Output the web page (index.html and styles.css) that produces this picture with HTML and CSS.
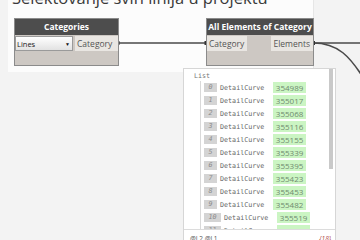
FILE: index.html
```html
<!DOCTYPE html>
<html>
<head>
<meta charset="utf-8">
<link rel="stylesheet" href="styles.css">
</head>
<body>
<div class="canvas">
  <div class="slide"></div>
  <div class="title">Selektovanje svih linija u projektu</div>

  <svg class="wires" width="360" height="240" viewBox="0 0 360 240">
    <path d="M118 43 L206 43" />
    <path d="M313 43 L360 43" />
    <path d="M313 43 C338 43 350 56 366 82" />
    <rect x="116.5" y="41" width="3" height="4" />
    <rect x="204.5" y="41" width="3" height="4" />
    <rect x="312" y="41" width="3" height="4" />
  </svg>

  <div class="node node-cat">
    <div class="node-head">Categories</div>
    <div class="node-ports">
      <div class="dropdown"><span>Lines</span><span class="arrow">▼</span></div>
      <div class="port">Category</div>
    </div>
  </div>

  <div class="node node-all">
    <div class="node-head">All Elements of Category</div>
    <div class="node-ports split">
      <div class="port">Category</div>
      <div class="port">Elements</div>
    </div>
  </div>

  <div class="watch">
    <div class="scroll"></div>
    <div class="watch-body">
      <div class="list-label">List</div>
      <div class="rows">
        <div class="row"><span class="idx">0</span><span class="type">DetailCurve</span><span class="val">354989</span></div>
        <div class="row"><span class="idx">1</span><span class="type">DetailCurve</span><span class="val">355017</span></div>
        <div class="row"><span class="idx">2</span><span class="type">DetailCurve</span><span class="val">355068</span></div>
        <div class="row"><span class="idx">3</span><span class="type">DetailCurve</span><span class="val">355116</span></div>
        <div class="row"><span class="idx">4</span><span class="type">DetailCurve</span><span class="val">355155</span></div>
        <div class="row"><span class="idx">5</span><span class="type">DetailCurve</span><span class="val">355339</span></div>
        <div class="row"><span class="idx">6</span><span class="type">DetailCurve</span><span class="val">355395</span></div>
        <div class="row"><span class="idx">7</span><span class="type">DetailCurve</span><span class="val">355423</span></div>
        <div class="row"><span class="idx">8</span><span class="type">DetailCurve</span><span class="val">355453</span></div>
        <div class="row"><span class="idx">9</span><span class="type">DetailCurve</span><span class="val">355482</span></div>
        <div class="row"><span class="idx">10</span><span class="type">DetailCurve</span><span class="val">355519</span></div>
        <div class="row"><span class="idx">11</span><span class="type">DetailCurve</span><span class="val">355548</span></div>
      </div>
    </div>
    <div class="watch-foot">
      <span class="levels">@L2 @L1</span>
      <span class="count">{18}</span>
    </div>
  </div>
</div>
</body>
</html>
```

FILE: styles.css
```css
html, body {
  margin: 0;
  padding: 0;
}
body {
  width: 360px;
  height: 240px;
  overflow: hidden;
  background: #f3f3f3;
  font-family: "Open Sans", "Liberation Sans", sans-serif;
}
.canvas {
  position: relative;
  width: 360px;
  height: 240px;
}
.slide {
  position: absolute;
  left: 8px;
  top: 0;
  width: 305px;
  height: 72px;
  background: #fcfcfc;
  border-right: 1px solid #e6e6e6;
}
.title {
  position: absolute;
  left: 12px;
  top: -10px;
  font-size: 16.5px;
  line-height: 16px;
  color: #3a3a3a;
  white-space: nowrap;
}
.wires {
  position: absolute;
  left: 0;
  top: 0;
}
.wires path {
  fill: none;
  stroke: #4a4a4a;
  stroke-width: 1.6;
}
.wires rect {
  fill: #333;
}
.node {
  position: absolute;
  top: 18px;
  height: 46px;
  background: #cdc8c3;
  border: 1px solid #8b8b8b;
  display: flex;
  flex-direction: column;
}
.node-cat {
  left: 14px;
  width: 103px;
}
.node-all {
  left: 206px;
  width: 106px;
}
.node-head {
  height: 16px;
  background: #4d4d4d;
  color: #fff;
  font-weight: bold;
  font-size: 8.5px;
  line-height: 16px;
  text-align: center;
  white-space: nowrap;
}
.node-ports {
  display: flex;
  gap: 2px;
  height: 15px;
  margin-top: 1px;
}
.node-ports.split {
  justify-content: space-between;
}
.port {
  background: #e9e6e2;
  color: #555;
  font-size: 8.5px;
  line-height: 15px;
  padding: 0 3px 0 2px;
  white-space: nowrap;
}
.node-cat .port {
  flex: 1;
}
.dropdown {
  width: 58px;
  box-sizing: border-box;
  height: 15px;
  border: 1px solid #9a9a9a;
  background: linear-gradient(#ffffff, #e2e2e2);
  display: flex;
  align-items: center;
  justify-content: space-between;
  padding: 0 2px 0 1px;
  font-size: 7.5px;
  color: #222;
}
.dropdown .arrow {
  font-size: 5px;
  color: #111;
}
.watch {
  position: absolute;
  left: 183px;
  top: 68px;
  width: 151px;
  height: 180px;
  background: #fff;
  border: 1px solid #d6d6d6;
}
.scroll {
  position: absolute;
  right: 2px;
  top: 0;
  width: 4px;
  height: 100px;
  background: #c9c9c9;
}
.watch-body {
  height: 160px;
  overflow: hidden;
  padding-top: 3px;
  box-sizing: border-box;
}
.list-label {
  font-family: "DejaVu Sans Mono", monospace;
  font-size: 6.7px;
  line-height: 9px;
  color: #777;
  padding-left: 10px;
}
.rows {
  margin-left: 16px;
  border-left: 1px solid #d9d9d9;
  padding-left: 3px;
}
.row {
  height: 13px;
  display: flex;
  align-items: center;
}
.idx {
  background: #d4d4d4;
  color: #8a8a8a;
  font-family: "DejaVu Sans Mono", monospace;
  font-style: italic;
  font-size: 6.7px;
  line-height: 9px;
  padding: 0 4.5px;
  min-width: 4px;
}
.type {
  font-family: "DejaVu Sans Mono", monospace;
  font-size: 6.7px;
  color: #666;
  margin-left: 3px;
}
.val {
  margin-left: 9px;
  background: #cbf5c3;
  color: #6f8a6f;
  font-size: 8px;
  line-height: 11px;
  padding: 0 2.5px;
}
.watch-foot {
  border-top: 1px solid #dcdcdc;
  display: flex;
  justify-content: space-between;
  padding: 4px 4px 0 6px;
  font-size: 6.5px;
  line-height: 9px;
}
.levels {
  color: #555;
}
.count {
  color: #b04545;
  font-style: italic;
}
```
